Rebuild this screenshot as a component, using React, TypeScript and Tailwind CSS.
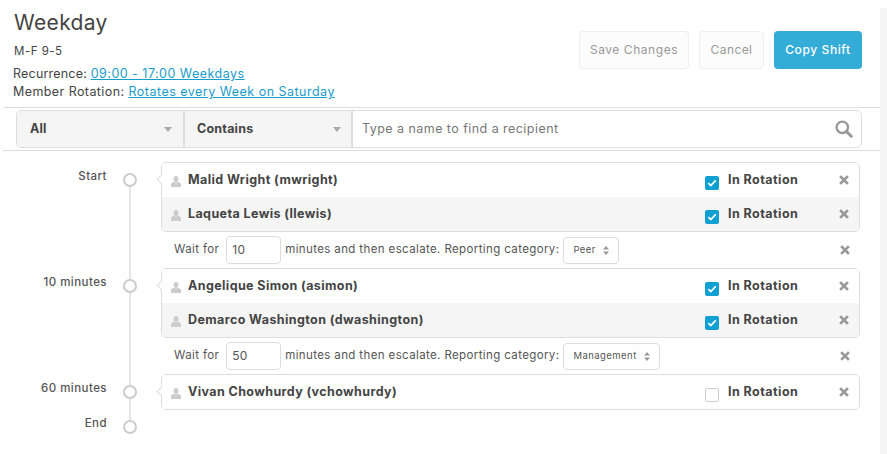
import React from "react";

const XIcon = () => (
  <svg width="10" height="10" viewBox="0 0 10 10" className="block shrink-0">
    <path d="M2 2 L8 8 M8 2 L2 8" stroke="#999" strokeWidth="2.6" strokeLinecap="square" fill="none" />
  </svg>
);

const PersonIcon = () => (
  <svg width="10" height="11" viewBox="0 0 10 11" className="block shrink-0">
    <ellipse cx="5" cy="3" rx="2.5" ry="2.9" fill="#ccc" />
    <path d="M0 11 V8.6 C0 6.9 1.4 6.1 2.8 5.7 C3.9 6.6 6.1 6.6 7.2 5.7 C8.6 6.1 10 6.9 10 8.6 V11 Z" fill="#ccc" />
  </svg>
);

const SortIcon = () => (
  <svg width="6" height="9" viewBox="0 0 6 9" className="block shrink-0">
    <path d="M3 0 L6 3.4 H0 Z M3 9 L6 5.6 H0 Z" fill="#999" />
  </svg>
);

const Caret = () => (
  <svg width="8" height="5" viewBox="0 0 8 5" className="block shrink-0">
    <path d="M0 0 H8 L4 5 Z" fill="#aaa" />
  </svg>
);

const Check = ({ on }: { on: boolean }) =>
  on ? (
    <span className="flex h-[14px] w-[14px] items-center justify-center rounded-[2px] bg-[#0f9fd0]">
      <svg width="10" height="8" viewBox="0 0 10 8" className="block">
        <path d="M1.3 4.2 L3.8 6.5 L8.7 1.3" stroke="#fff" strokeWidth="1.7" fill="none" />
      </svg>
    </span>
  ) : (
    <span className="block h-[14px] w-[14px] rounded-[2px] border border-[#ccc] bg-white" />
  );

const Member = ({ name, checked, shaded }: { name: string; checked: boolean; shaded?: boolean }) => (
  <div className={`flex h-[34px] items-center pl-[9px] pr-[10px] ${shaded ? "bg-[#f5f5f5]" : "bg-white"}`}>
    <span className="mt-[2px]"><PersonIcon /></span>
    <span className="ml-[7px] flex-1 text-[12.5px] font-bold tracking-[0.4px] text-[#444]">{name}</span>
    <span className="mt-[6px]"><Check on={checked} /></span>
    <span className="ml-[9px] w-[111px] text-[12.5px] font-bold tracking-[0.45px] text-[#444]">In Rotation</span>
    <XIcon />
  </div>
);

const Group = ({ children }: { children: React.ReactNode }) => (
  <div className="relative rounded-[5px] border border-[#ddd] bg-white">
    <span className="absolute left-[-4px] top-[13px] h-[7px] w-[7px] rotate-45 border-b border-l border-[#ddd] bg-white" />
    <div className="overflow-hidden rounded-[4px]">{children}</div>
  </div>
);

const Wait = ({ minutes, category, selectW }: { minutes: string; category: string; selectW: string }) => (
  <div className="flex h-[36px] items-center pl-[13px] pr-[10px] text-[11.5px] tracking-[0.38px] text-[#555]">
    <span>Wait for</span>
    <span className="ml-[7px] flex h-[28px] w-[55px] items-center rounded-[4px] border border-[#ddd] pl-[5px] text-[12px] text-[#555]">{minutes}</span>
    <span className="ml-[4px]">minutes and then escalate. Reporting category:</span>
    <span className={`ml-[4px] flex h-[27px] items-center justify-between rounded-[4px] border border-[#ddd] pl-[9px] pr-[9px] text-[9.5px] tracking-[0.45px] text-[#555] ${selectW}`}>
      {category}
      <SortIcon />
    </span>
    <span className="ml-auto"><XIcon /></span>
  </div>
);

const Step = ({ label, first, children }: { label: string; first?: boolean; children: React.ReactNode }) => (
  <div className="flex">
    <div className="w-[107px] pt-[6px] text-right text-[11.5px] font-medium leading-[16px] tracking-[0.45px] text-[#555]">{label}</div>
    <div className="flex w-[46px] flex-col items-center">
      <div className={`h-[11px] w-[2px] ${first ? "" : "bg-[#e5e5e5]"}`} />
      <div className="h-[14px] w-[14px] shrink-0 rounded-full border-2 border-[#ccc] bg-white" />
      <div className="w-[2px] flex-1 bg-[#e5e5e5]" />
    </div>
    <div className="ml-[8px] flex-1">{children}</div>
  </div>
);

export default function App() {
  return (
    <div className="flex h-[454px] w-[887px] overflow-hidden bg-white font-['Inter','Liberation_Sans',sans-serif] text-[#444]">
      <main className="w-[880px] shrink-0">
        <header className="ml-[3px] flex h-[108px] justify-between border-b border-[#ddd] pl-[10px] pr-[18px]">
          <div className="pt-[11px]">
            <h1 className="pl-[1px] text-[21px] font-normal leading-[24px] tracking-[0.35px] text-[#444]">Weekday</h1>
            <p className="mt-[7px] pl-[1px] text-[11.5px] leading-[18px] tracking-[0.5px] text-[#444]">M-F 9-5</p>
            <p className="mt-[5px] text-[12.5px] leading-[18px] text-[#444]">
              <span className="tracking-[0.2px]">Recurrence: </span>
              <a className="tracking-[0.48px] text-[#1a9ccc] underline">09:00 - 17:00 Weekdays</a>
            </p>
            <p className="text-[12.5px] leading-[18px] text-[#444]">
              <span className="tracking-[0.42px]">Member Rotation: </span>
              <a className="tracking-[0.48px] text-[#1a9ccc] underline">Rotates every Week on Saturday</a>
            </p>
          </div>
          <div className="flex gap-[10px] pt-[31px]">
            <button className="h-[38px] w-[110px] rounded-[4px] border border-[#eee] bg-[#fcfcfc] text-[12px] tracking-[0.55px] text-[#999]">Save Changes</button>
            <button className="h-[38px] w-[65px] rounded-[4px] border border-[#eee] bg-[#fcfcfc] text-[12px] tracking-[0.4px] text-[#999]">Cancel</button>
            <button className="h-[38px] w-[88px] rounded-[4px] bg-[#33acd8] text-[12px] font-medium tracking-[0.6px] text-white">Copy Shift</button>
          </div>
        </header>
        <div className="ml-[3px] border-b border-[#ddd] pb-[2px] pl-[13px] pr-[18px] pt-[2px]">
          <div className="flex h-[38px] rounded-[5px] border border-[#ddd] bg-white">
            <div className="flex w-[168px] items-center justify-between rounded-l-[4px] border-r-2 border-[#ddd] bg-[#f5f5f5] pl-[13px] pr-[11px] text-[12.5px] font-bold tracking-[0.2px] text-[#444]">
              All <Caret />
            </div>
            <div className="flex w-[168px] items-center justify-between border-r-2 border-[#ddd] bg-[#f5f5f5] pl-[12px] pr-[10px] text-[12.5px] font-bold tracking-[0.2px] text-[#444]">
              Contains <Caret />
            </div>
            <div className="flex flex-1 items-center justify-between pl-[9px] pr-[8px] text-[12.5px] tracking-[0.45px] text-[#777]">
              Type a name to find a recipient
              <svg width="18" height="18" viewBox="0 0 18 18" className="block">
                <circle cx="7.3" cy="7.3" r="5.7" stroke="#999" strokeWidth="2.4" fill="none" />
                <path d="M11.6 11.6 L16.3 16.3" stroke="#999" strokeWidth="3" strokeLinecap="round" />
              </svg>
            </div>
          </div>
        </div>
        <div className="mr-[20px] pt-[11px]">
          <Step label="Start" first>
            <Group>
              <Member name="Malid Wright (mwright)" checked />
              <Member name="Laqueta Lewis (llewis)" checked shaded />
            </Group>
            <Wait minutes="10" category="Peer" selectW="w-[56px]" />
          </Step>
          <Step label="10 minutes">
            <Group>
              <Member name="Angelique Simon (asimon)" checked />
              <Member name="Demarco Washington (dwashington)" checked shaded />
            </Group>
            <Wait minutes="50" category="Management" selectW="w-[97px]" />
          </Step>
          <Step label="60 minutes">
            <div className="pb-[10px]">
              <Group>
                <Member name="Vivan Chowhurdy (vchowhurdy)" checked={false} />
              </Group>
            </div>
          </Step>
          <div className="flex">
            <div className="-mt-[5px] w-[107px] text-right text-[11.5px] font-medium leading-[16px] tracking-[0.45px] text-[#555]">End</div>
            <div className="flex w-[46px] justify-center">
              <div className="h-[14px] w-[14px] rounded-full border-2 border-[#ccc] bg-white" />
            </div>
          </div>
        </div>
      </main>
      <aside className="mt-[8px] flex-1 bg-[#f5f5f5]" />
    </div>
  );
}
